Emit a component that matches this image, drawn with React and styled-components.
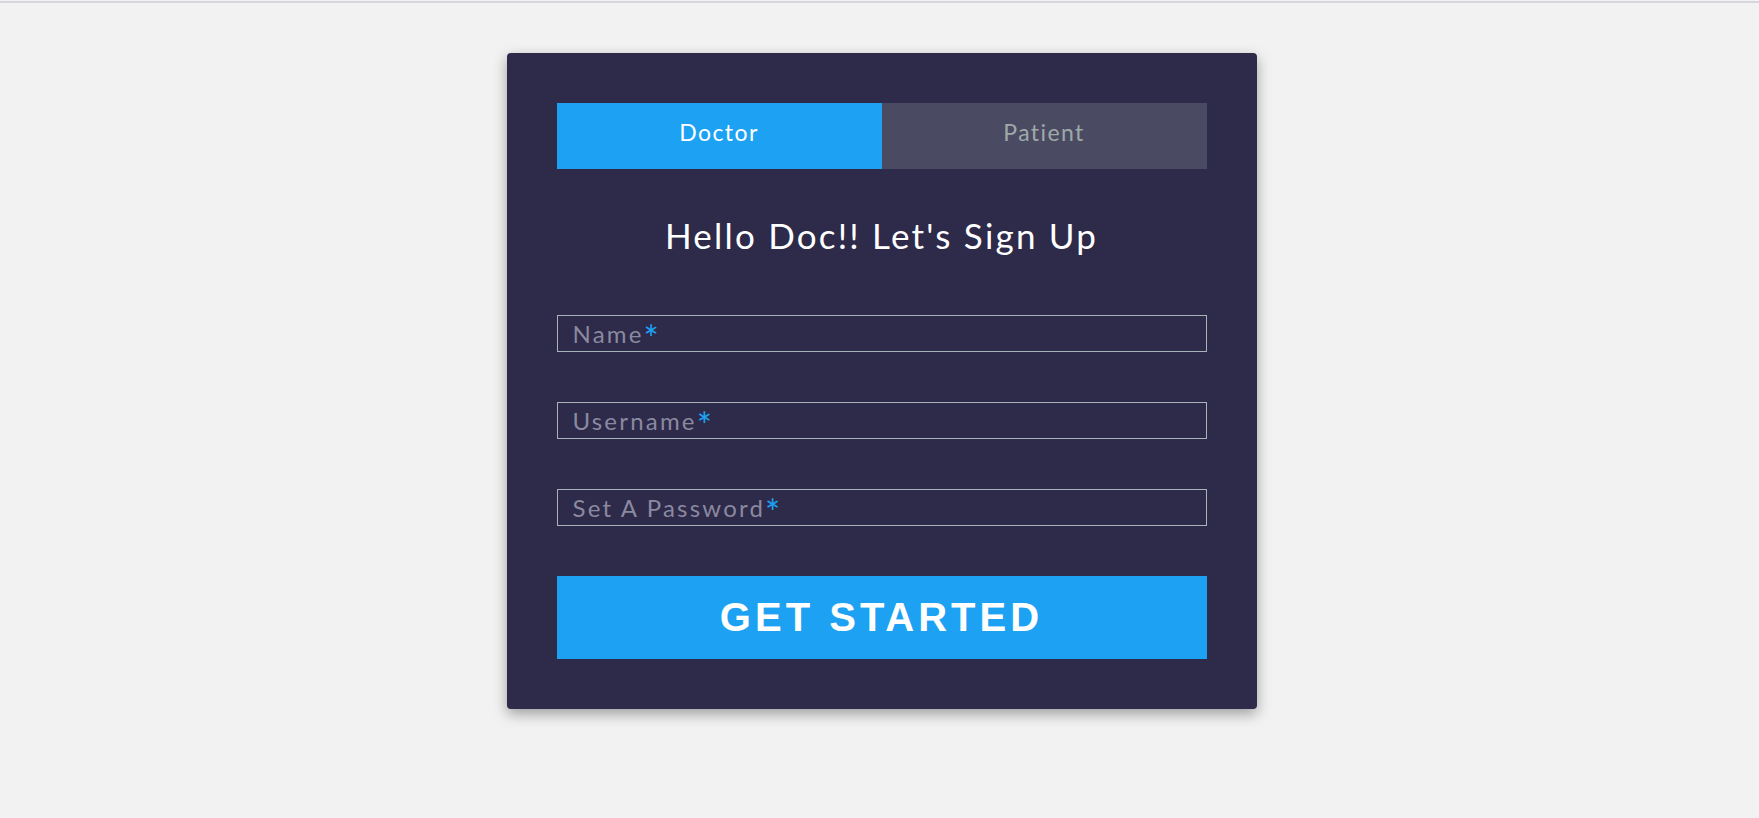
import React, { useState } from 'react';
import styled, { createGlobalStyle } from 'styled-components';

const GlobalStyle = createGlobalStyle`
    html, body {
        margin: 0;
        padding: 0;
        background-color: #f2f2f2;
        font-family: 'Lato', 'Noto Sans', sans-serif;
    }
    * {
        box-sizing: border-box;
    }
`

const Page = styled.div`
    min-height: 818px;
    padding-top: 1px;
`

const TopRule = styled.div`
    height: 2px;
    background-color: #d8d6dd;
`

const Card = styled.div`
    width: 750px;
    margin: 50px 0 0 calc(50% - 373px);
    padding: 50px;
    display: flex;
    flex-direction: column;
    background-color: #2d2a4a;
    border-radius: 4px;
    box-shadow: 0 5px 14px rgba(0, 0, 0, 0.35);
`

const Tabs = styled.div`
    display: flex;
    height: 66px;
`

const Tab = styled.button`
    flex: 1;
    border: none;
    outline: none;
    cursor: pointer;
    padding: 0 0 9px;
    font-family: inherit;
    font-size: 23px;
    letter-spacing: 1.4px;
    background-color: ${props => props.active ? '#1da1f2' : '#4a4b63'};
    color: ${props => props.active ? '#ffffff' : '#9fa9a8'};
`

const Heading = styled.h2`
    margin: 45px 0 59px;
    height: 42px;
    line-height: 42px;
    text-align: center;
    font-size: 35px;
    font-weight: 400;
    letter-spacing: 2.2px;
    color: #ffffff;
`

const Form = styled.form`
    display: flex;
    flex-direction: column;
    gap: 50px;
`

const Field = styled.label`
    position: relative;
    display: block;
    height: 37px;
    border: 1px solid #aab3ba;
`

const Input = styled.input`
    width: 100%;
    height: 100%;
    padding: 0 15px;
    border: none;
    outline: none;
    background: transparent;
    color: #ffffff;
    font-family: inherit;
    font-size: 24px;
    letter-spacing: 2px;
`

// placeholder sits over the input so the asterisk can be blue
const Placeholder = styled.span`
    position: absolute;
    left: 15px;
    top: 0;
    line-height: 35px;
    font-size: 24px;
    letter-spacing: 2.2px;
    color: #8a89a0;
    pointer-events: none;
`

const Star = styled.span`
    display: inline-block;
    color: #1da1f2;
    font-size: 36px;
    line-height: 0;
    letter-spacing: 0;
    vertical-align: -9px;
`

const Submit = styled.button`
    height: 83px;
    border: none;
    cursor: pointer;
    background-color: #1da1f2;
    color: #ffffff;
    font-family: 'Liberation Sans', Arial, sans-serif;
    font-weight: 700;
    font-size: 40px;
    letter-spacing: 4px;
    text-transform: uppercase;
`

function TextField({ label, type }) {
    const [value, setValue] = useState('');
    return (
        <Field>
            <Input type={type || 'text'} value={value} onChange={e => setValue(e.target.value)} />
            {!value && <Placeholder>{label}<Star>*</Star></Placeholder>}
        </Field>
    )
}

export default function App() {
    const [role, setRole] = useState('doctor');

    return (
        <Page>
            <GlobalStyle />
            <TopRule />
            <Card>
                <Tabs>
                    <Tab active={role === 'doctor'} onClick={() => setRole('doctor')}>Doctor</Tab>
                    <Tab active={role === 'patient'} onClick={() => setRole('patient')}>Patient</Tab>
                </Tabs>
                <Heading>{role === 'doctor' ? "Hello Doc!! Let's Sign Up" : "Hello There!! Let's Sign Up"}</Heading>
                <Form onSubmit={e => e.preventDefault()}>
                    <TextField label="Name" />
                    <TextField label="Username" />
                    <TextField label="Set A Password" type="password" />
                    <Submit type="submit">Get Started</Submit>
                </Form>
            </Card>
        </Page>
    )
}
